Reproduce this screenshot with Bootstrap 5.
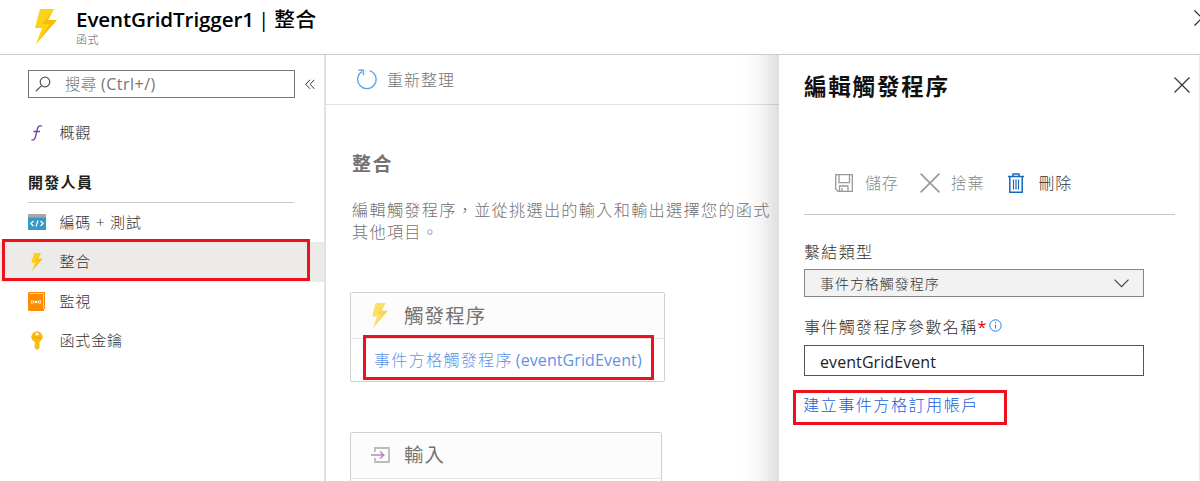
<!DOCTYPE html>
<html lang="zh-TW">
<head>
<meta charset="utf-8">
<meta name="viewport" content="width=device-width, initial-scale=1">
<title>EventGridTrigger1 | 整合</title>
<link href="https://cdn.jsdelivr.net/npm/bootstrap@5.3.0/dist/css/bootstrap.min.css" rel="stylesheet">
<style>
body{font-family:"Open Sans","Noto Sans CJK TC",sans-serif;font-size:15px;letter-spacing:.85px;color:#323130;height:481px;overflow:hidden;font-weight:300}
svg{display:block;flex:none}
.topbar{height:55px;flex:none;border-bottom:1px solid #ccc;padding:6px 0 0 35px;overflow:hidden}
.topbar h1{font-size:20.6px;line-height:27px;color:#000;font-weight:500;letter-spacing:.8px;white-space:nowrap}
.topbar h1 b{font-weight:600;font-size:20.6px;letter-spacing:-.1px}
.topbar h1 i{font-style:normal;font-weight:400;letter-spacing:0}
.subtitle{font-size:11px;line-height:14px;color:#605e5c;letter-spacing:.6px}
.side{width:326px;border-right:2px solid #e1e1e1;flex:none;padding-top:15px}
.searchbox{width:267px;height:28px;border:1px solid #767676;margin-left:28px;color:#767676;padding-left:6px}
.side-item{height:39.5px;padding-left:28px;line-height:39px;white-space:nowrap}
.side-item svg{margin-right:13.5px}
.side-item.active{background:#edebe9}
.side-head{margin:0 30px 0 28px;height:48px;padding-top:16px;line-height:22px;font-weight:700;border-bottom:1px solid #c8c8c8;color:#201f1e;letter-spacing:1.3px}
.mark-box{position:absolute;border:3px solid #ec111b;pointer-events:none}
.workspace{width:453px;flex:none;position:relative;overflow:hidden;color:#747373}
.workspace::after{content:"";position:absolute;right:0;top:0;bottom:0;width:40px;background:linear-gradient(90deg,transparent,rgba(0,0,0,.03) 50%,rgba(0,0,0,.13))}
.cmdbar{height:50px;border-bottom:1px solid #e1e1e1;padding-left:30px;font-size:16px;letter-spacing:1px}
.intro{width:460px;font-size:16.2px;letter-spacing:1.26px;line-height:22px}
.bind{border:1.5px solid #d0d0d0;border-radius:2px;margin-left:24px;position:relative}
.bind-head{height:46px;background:#fcfcfc;border-bottom:1px solid #e5e5e5;padding-left:20px;font-size:19.5px;letter-spacing:1.1px;font-weight:400}
.bind a{color:#5e93e6;text-decoration:none;font-size:16px}
.blade{padding:0 24px 0 25px;border-right:1px solid #eaeaea;background:#fff;position:relative;z-index:1}
.blade h2{font-size:22.5px;letter-spacing:1.8px;font-weight:700;color:#111;line-height:30px}
.tools{height:62px;border-bottom:1px solid #c8c8c8;padding-left:31px;font-size:16px;color:#8b8a89}
.field-label{font-size:16px;letter-spacing:1.35px;line-height:24px;white-space:nowrap}
.field{width:340px;border:1px solid #868686;padding:0 14px 0 15px}
.field.locked{height:28px;background:#f2f2f2;font-size:14px;letter-spacing:.95px}
.field.entry{height:31px;border-color:#555;color:#222;font-size:16px;letter-spacing:.08px;font-weight:400}
.create-link{color:#1660dc;text-decoration:none;font-size:16.2px;letter-spacing:1.4px;line-height:24px}
</style>
</head>
<body class="d-flex flex-column">
<svg width="0" height="0" class="position-absolute"><defs><symbol id="bolt" viewBox="0 0 22 35"><path fill="#fcd116" d="M5 0h14l-6 11h9L1 35l6-16H0z"/><path fill="#f5a800" d="M13 11h9L1 35 15 15H7L18 2z" opacity=".5"/></symbol></defs></svg>
<header class="topbar d-flex position-relative">
  <svg width="22" height="35" style="margin:3px 19px 0 0"><use href="#bolt"/></svg>
  <div><h1 class="m-0"><b>EventGridTrigger1</b><i style="margin:0 5px 0 4px">|</i>整合</h1><div class="subtitle">函式</div></div>
  <svg class="position-absolute" style="left:1194px;top:10px" width="16" height="16" stroke="#222" stroke-width="1.2"><path d="M.5 .5l15 15M15.5 .5l-15 15"/></svg>
</header>
<div class="d-flex flex-grow-1" style="min-height:0">
  <nav class="side position-relative">
    <div class="d-flex align-items-center">
      <div class="searchbox d-flex align-items-center"><svg width="16" height="16" fill="none" stroke="#555" stroke-width="1.2"><circle cx="10" cy="6" r="4.8"/><path d="M6.6 9.6L.8 15.2"/></svg><span style="margin-left:14px;font-size:15.5px;letter-spacing:.3px">搜尋 <span style="font-size:16px;font-weight:400;letter-spacing:.5px">(Ctrl+/)</span></span></div>
      <svg width="10" height="11" style="margin-left:10px" fill="none" stroke="#333"><path d="M5 .8L.8 5.3 5 9.8M9.3 .8L5.1 5.3l4.2 4.5"/></svg>
    </div>
    <div class="side-item d-flex align-items-center" style="margin-top:15px">
      <svg width="18" height="18" fill="none" stroke="#7a3fa0" stroke-width="1.4"><path d="M3.500 15.600q3 1.300 4-3l2-8q1-3.600 4.500-2.400M5.500 7.500h6.500"/></svg>概觀</div>
    <div class="side-head" style="margin-top:2px">開發人員</div>
    <div class="side-item d-flex align-items-center"><svg width="18" height="16"><path fill="#3999c6" d="M0 0h18v16H0z"/><path fill="#a7a9ac" d="M0 0h18v3.500H0z"/><path d="M5.500 7L2.800 9.500l2.700 2.500M12.500 7l2.700 2.500-2.700 2.500M10 6.500l-2 6" fill="none" stroke="#fff" stroke-width="1.200"/></svg>編碼 + 測試</div>
    <div class="side-item active d-flex align-items-center"><svg width="18" height="18"><use href="#bolt" x="3" width="12" height="18"/></svg>整合</div>
    <div class="side-item d-flex align-items-center"><svg width="18" height="19"><path fill="#ff8c00" d="M0 1.500Q0 0 1.500 0H17v17h-1v2H1.500Q0 19 0 17.500z"/><path d="M2 1.500h13.500V17" fill="none" stroke="#ffd199"/><circle cx="8" cy="10" r="1.300" fill="#fff"/><path d="M5.800 8.800q-.8 1.200 0 2.400M4.200 7.800q-1.200 2.200 0 4.400M10.200 8.800q.8 1.200 0 2.400M11.800 7.800q1.200 2.200 0 4.400" fill="none" stroke="#fff" stroke-width=".9"/></svg>監視</div>
    <div class="side-item d-flex align-items-center"><svg width="18" height="19"><path fill="#fcb813" fill-rule="evenodd" d="M9 0l4 1.700 2 4-1.500 3.600L11.500 11v6L9 19l-2.300-2V11L4.500 9.300 3 5.700l2-4zM9 1.500a1.500 1.500 0 100 3 1.500 1.500 0 000-3z"/><path fill="#e9a000" d="M5 6h8v.8H5z"/></svg>函式金鑰</div>
    <div class="mark-box" style="left:2px;top:184px;width:308px;height:42px"></div>
  </nav>
  <main class="workspace">
    <div class="cmdbar d-flex align-items-center"><svg width="21" height="21" class="me-2" fill="none" stroke="#64a5de" stroke-width="1.400"><path d="M13.500 1.600A9.200 9.200 0 1 1 6 2.600M2.500 1.200h5v5"/></svg><span style="margin-left:2px">重新整理</span></div>
    <div style="padding:47px 0 0 26px"><div style="font-size:19px;font-weight:700;line-height:24px;letter-spacing:1.4px">整合</div>
    <div class="intro" style="margin-top:23px">編輯觸發程序，並從挑選出的輸入和輸出選擇您的函式<br>其他項目。</div></div>
    <section class="bind" style="width:315px;height:90px;margin-top:49px">
      <div class="bind-head d-flex align-items-center"><svg width="18" height="25" style="margin-right:15px" opacity=".65"><use href="#bolt" width="18" height="25"/></svg>觸發程序</div>
      <div style="padding:9px 0 0 23px;line-height:24px" class="text-nowrap"><a href="#" style="letter-spacing:1.35px">事件方格觸發程序</a><a href="#" style="font-weight:400;letter-spacing:.1px;margin-left:3px">(eventGridEvent)</a></div>
      <div class="mark-box" style="left:12px;top:42px;width:291px;height:45px"></div>
    </section>
    <section class="bind" style="width:312px;height:90px;margin-top:50px">
      <div class="bind-head d-flex align-items-center" style="padding-bottom:2px"><svg width="20" height="18" fill="none" style="margin-right:13px"><path d="M4 6V2h14v14H4v-4" stroke="#bbb" stroke-width="1.800"/><path d="M0 9h12.500M9 5.500L12.800 9 9 12.500" stroke="#b18ac0" stroke-width="1.500"/></svg>輸入</div>
    </section>
  </main>
  <aside class="blade flex-grow-1">
    <div class="d-flex justify-content-between align-items-center" style="padding-top:16px;margin-right:-15px"><h2 class="m-0" style="padding-top:1px">編輯觸發程序</h2><svg width="16" height="16" style="margin-bottom:3px" stroke="#333" stroke-width="1.200"><path d="M.5 .5l15 15M15.500 .5l-15 15"/></svg></div>
    <div class="tools d-flex align-items-center" style="margin-top:51px;padding-bottom:1px">
      <svg width="18" height="18" fill="none" stroke="#999" stroke-width="1.300"><path d="M.7.700h16.600v16.600H3L.7 15zM4 .700v8h10.500v-8M4.500 17v-5h8.500v5M7 14v3"/></svg><span style="margin-left:12px">儲存</span>
      <svg width="20" height="20" style="margin-left:21px" stroke="#999" stroke-width="1.600"><path d="M.6.600l18.800 18.800M19.400.600L.6 19.400"/></svg><span style="margin-left:11px">捨棄</span>
      <svg width="16" height="20" style="margin-left:24px" fill="none" stroke="#1769c0" stroke-width="1.500"><path d="M0 3.500h16M5 3V1h6v2M1.800 3.500v15.700h12.400V3.500"/><path d="M5.500 6.500v10M8 6.500v10M10.500 6.500v10" stroke-width="1.200"/></svg><span style="margin-left:14px;color:#323130">刪除</span>
    </div>
    <div class="field-label" style="margin-top:25px">繫結類型</div>
    <div class="field locked d-flex align-items-center justify-content-between" style="margin-top:5px"><span>事件方格觸發程序</span><svg width="15" height="9" fill="none" stroke="#444" stroke-width="1.200"><path d="M.5.700l7 7 7-7"/></svg></div>
    <div class="field-label d-flex" style="margin-top:18px">事件觸發程序參數名稱<b style="color:#e3000f;letter-spacing:0">*</b><svg width="13" height="13" style="margin:4px 0 0 3px" fill="none" stroke="#2f7be0"><circle cx="6.500" cy="6.500" r="5.700"/><path d="M6.500 5.500v4M6.500 3v1.300"/></svg></div>
    <div class="field entry d-flex align-items-center" style="margin-top:6px;padding-top:2px">eventGridEvent</div>
    <div style="margin-top:17px" class="position-relative"><a class="create-link" href="#" style="margin-left:-1px">建立事件方格訂用帳戶</a><div class="mark-box" style="left:-11px;top:-3px;width:214px;height:35px"></div></div>
  </aside>
</div>
<script src="https://cdn.jsdelivr.net/npm/bootstrap@5.3.0/dist/js/bootstrap.bundle.min.js"></script>
</body>
</html>
